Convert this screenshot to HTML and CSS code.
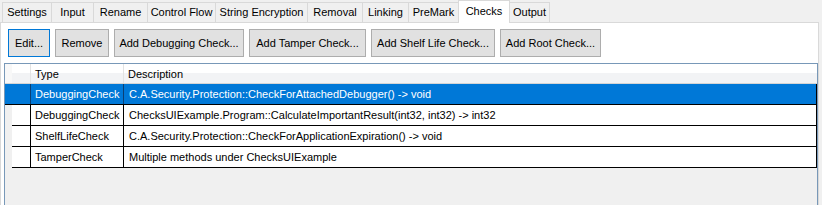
FILE: index.html
```html
<!DOCTYPE html>
<html lang="en">

<head>
    <meta charset="UTF-8">
    <meta name="viewport" content="width=device-width, initial-scale=1.0">
    <title>Checks</title>
    <link rel="stylesheet" href="styles.css">
</head>

<body>
    <div class="tabs">
        <div class="tab tab-settings">Settings</div>
        <div class="tab tab-input">Input</div>
        <div class="tab tab-rename">Rename</div>
        <div class="tab tab-flow">Control Flow</div>
        <div class="tab tab-strings">String Encryption</div>
        <div class="tab tab-removal">Removal</div>
        <div class="tab tab-linking">Linking</div>
        <div class="tab tab-premark">PreMark</div>
        <div class="tab tab-checks active">Checks</div>
        <div class="tab tab-output">Output</div>
    </div>
    <div class="panel">
        <div class="toolbar">
            <button class="btn btn-edit focused">Edit...</button>
            <button class="btn btn-remove">Remove</button>
            <button class="btn btn-debug">Add Debugging Check...</button>
            <button class="btn btn-tamper">Add Tamper Check...</button>
            <button class="btn btn-shelf">Add Shelf Life Check...</button>
            <button class="btn btn-root">Add Root Check...</button>
        </div>
        <div class="grid">
            <div class="row header">
                <div class="cell row-head"></div>
                <div class="cell col-type">Type</div>
                <div class="cell col-desc">Description</div>
            </div>
            <div class="row selected">
                <div class="cell row-head"></div>
                <div class="cell col-type">DebuggingCheck</div>
                <div class="cell col-desc">C.A.Security.Protection::CheckForAttachedDebugger() -&gt; void</div>
            </div>
            <div class="row">
                <div class="cell row-head"></div>
                <div class="cell col-type">DebuggingCheck</div>
                <div class="cell col-desc">ChecksUIExample.Program::CalculateImportantResult(int32, int32) -&gt; int32</div>
            </div>
            <div class="row">
                <div class="cell row-head"></div>
                <div class="cell col-type">ShelfLifeCheck</div>
                <div class="cell col-desc">C.A.Security.Protection::CheckForApplicationExpiration() -&gt; void</div>
            </div>
            <div class="row">
                <div class="cell row-head"></div>
                <div class="cell col-type">TamperCheck</div>
                <div class="cell col-desc">Multiple methods under ChecksUIExample</div>
            </div>
        </div>
    </div>
</body>

</html>
```

FILE: styles.css
```css
* {
    margin: 0;
    padding: 0;
    box-sizing: border-box;
    outline: none;
}

body {
    width: 822px;
    height: 205px;
    overflow: hidden;
    font-size: 11px;
    font-family: "Liberation Sans", Arial, sans-serif;
    color: #000;
    background-color: #f0f0f0;
}

/* tab strip */

.tabs {
    display: flex;
    align-items: flex-end;
    height: 22px;
    padding-left: 2px;
    position: relative;
    z-index: 1;
}

.tab {
    height: 20px;
    line-height: 19px;
    text-align: center;
    border: 1px solid #d9d9d9;
    border-bottom: none;
    margin-right: -1px;
    background-color: #f0f0f0;
    white-space: nowrap;
}

.tab.active {
    height: 23px;
    line-height: 20px;
    margin-bottom: -1px;
    background-color: #fff;
    position: relative;
}

.tab-settings { width: 50px; }
.tab-input { width: 43px; }
.tab-rename { width: 55px; }
.tab-flow { width: 69px; }
.tab-strings { width: 93px; }
.tab-removal { width: 56px; }
.tab-linking { width: 47px; }
.tab-premark { width: 51px; }
.tab-checks { width: 52px; }
.tab-output { width: 41px; }

/* tab page */

.panel {
    width: 819px;
    height: 190px;
    background-color: #fff;
    border: 1px solid #d9d9d9;
    padding: 6px 0 0 3px;
}

.toolbar {
    display: flex;
    gap: 5px;
    margin-left: 4px;
    margin-bottom: 6px;
}

.btn {
    height: 28px;
    font-size: 11px;
    font-family: "Liberation Sans", Arial, sans-serif;
    color: #000;
    background-color: #e1e1e1;
    border: 1px solid #adadad;
    white-space: nowrap;
}

.btn.focused {
    border-color: #0078d7;
}

.btn-edit { width: 42px; }
.btn-remove { width: 54px; }
.btn-debug { width: 130px; }
.btn-tamper { width: 117px; }
.btn-shelf { width: 124px; }
.btn-root { width: 101px; }

/* data grid */

.grid {
    width: 814px;
    height: 150px;
    border: 1px solid #7898b8;
    background-color: #f0f0f0;
}

.row {
    display: flex;
    height: 21px;
    background-color: #fff;
    border-bottom: 1px solid #000;
    margin-left: 7px;
}

.row.header {
    height: 20px;
    margin-left: 0;
    background: linear-gradient(#ffffff, #ffffff 45%, #f2f3f5 50%, #f2f3f5);
    border-bottom: 1px solid #d5d5d5;
}

.cell {
    line-height: 20px;
    white-space: nowrap;
    overflow: hidden;
}

.row-head {
    width: 19px;
    flex: none;
    border-right: 1px solid #000;
}

.header .row-head {
    width: 26px;
    border-right: 1px solid #e3e3e3;
    background: linear-gradient(to right, #f8f8f8 7px, transparent 7px);
}

.col-type {
    width: 93px;
    flex: none;
    padding-left: 4px;
    border-right: 1px solid #000;
}

.header .col-type {
    border-right: 1px solid #e3e3e3;
}

.col-desc {
    flex: 1;
    padding-left: 5px;
    border-right: 1px solid #000;
}

.header .col-desc {
    border-right: none;
    padding-left: 4px;
}

.row.selected {
    margin-left: 0;
    padding-left: 7px;
    color: #fff;
    background-color: #0078d7;
    box-shadow: inset 7px 0 0 #0078d7;
}

.selected .row-head {
    border-right-color: #0b3f73;
}

.selected .col-type {
    border-right-color: #0b3f73;
}
```
